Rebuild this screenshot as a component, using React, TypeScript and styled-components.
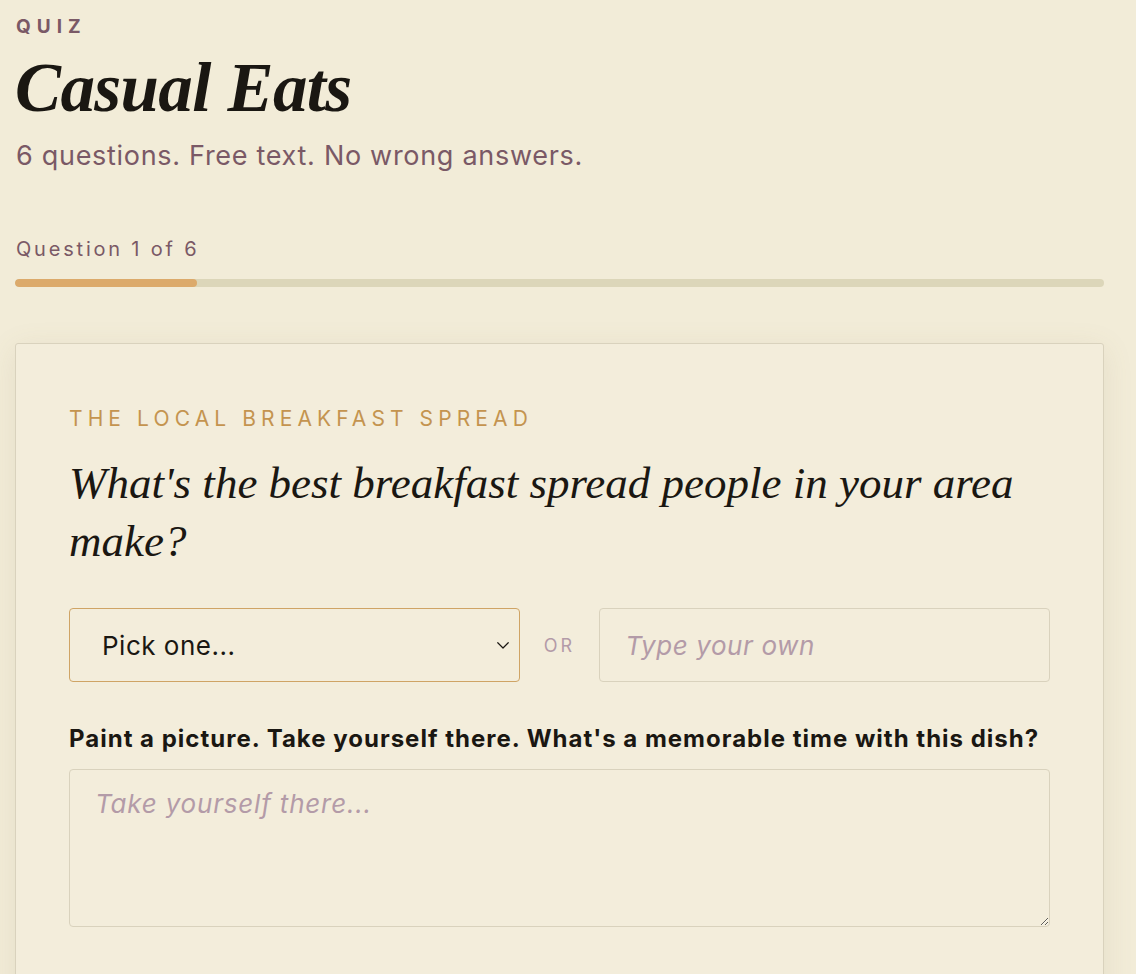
import React from "react";
import styled, { createGlobalStyle } from "styled-components";

const colors = {
  bg: "#f2ecd8",
  ink: "#1a1712",
  mauve: "#7a5966",
  mauveLight: "#b39ba8",
  gold: "#c4944f",
  goldBorder: "#cfa465",
  line: "#d9d2bd",
  track: "#dcd6b9",
  fill: "#dcaa6b",
};

const sans = `Inter, "Open Sans", "Liberation Sans", sans-serif`;
const serif = `"Liberation Serif", "DejaVu Serif", serif`;

const GlobalStyle = createGlobalStyle`
  html, body {
    margin: 0;
    background: ${colors.bg};
    font-family: ${sans};
    color: ${colors.ink};
  }
  * { box-sizing: border-box; }
`;

const Page = styled.main`
  padding: 14px 32px 0 15px;
  overflow: hidden;
  height: 974px;
`;

const Eyebrow = styled.div`
  font-size: 19px;
  line-height: 26px;
  font-weight: 700;
  letter-spacing: 6px;
  color: ${colors.mauve};
  padding-left: 1px;
`;

const Title = styled.h1`
  margin: 14px 0 0;
  font-family: ${serif};
  font-style: italic;
  font-weight: 700;
  font-size: 69px;
  line-height: 1;
  letter-spacing: -0.6px;
  color: ${colors.ink};
`;

const Subtitle = styled.p`
  margin: 16px 0 0 1px;
  font-size: 27px;
  line-height: 33px;
  letter-spacing: 0.7px;
  color: ${colors.mauve};
`;

const ProgressLabel = styled.div`
  margin: 64px 0 0 1px;
  font-size: 20px;
  line-height: 26px;
  letter-spacing: 2.8px;
  color: ${colors.mauve};
`;

const Track = styled.div`
  margin-top: 17px;
  height: 8px;
  border-radius: 4px;
  background: ${colors.track};
  overflow: hidden;
`;

const Fill = styled.div`
  height: 100%;
  border-radius: 4px;
  background: ${colors.fill};
`;

const Card = styled.section`
  margin-top: 56px;
  border: 1.5px solid ${colors.line};
  border-radius: 3px;
  background: #f3eddb;
  box-shadow: 0 6px 30px rgba(140, 120, 80, 0.12);
  padding: 61px 53px 120px;
`;

const Category = styled.div`
  font-size: 21px;
  line-height: 27px;
  letter-spacing: 5.1px;
  color: ${colors.gold};
`;

const Question = styled.h2`
  margin: 22px 0 0;
  font-family: ${serif};
  font-style: italic;
  font-weight: 400;
  font-size: 45px;
  line-height: 58px;
  color: ${colors.ink};
`;

const AnswerRow = styled.div`
  margin-top: 38px;
  display: grid;
  grid-template-columns: 1fr auto 1fr;
  align-items: center;
  gap: 24px;
`;

const SelectWrap = styled.div`
  position: relative;
`;

const Select = styled.select`
  appearance: none;
  width: 100%;
  height: 74px;
  padding: 0 48px 0 32px;
  font-family: ${sans};
  font-size: 26px;
  letter-spacing: 0.5px;
  color: ${colors.ink};
  background: transparent;
  border: 1.5px solid ${colors.goldBorder};
  border-radius: 4px;
  outline: none;
`;

const Chevron = styled.svg`
  position: absolute;
  right: 8px;
  top: 50%;
  transform: translateY(-50%);
  pointer-events: none;
`;

const Or = styled.span`
  font-size: 18px;
  letter-spacing: 3px;
  color: ${colors.mauveLight};
`;

const TextInput = styled.input`
  width: 100%;
  height: 74px;
  padding: 0 25px;
  font-family: ${sans};
  font-size: 26px;
  letter-spacing: 0.6px;
  color: ${colors.ink};
  background: transparent;
  border: 1.5px solid ${colors.line};
  border-radius: 4px;
  outline: none;
  &::placeholder {
    color: ${colors.mauveLight};
    font-style: italic;
  }
`;

const FieldLabel = styled.label`
  display: block;
  margin-top: 42px;
  font-size: 24px;
  line-height: 29px;
  font-weight: 700;
  letter-spacing: 1px;
  color: ${colors.ink};
`;

const TextArea = styled.textarea`
  display: block;
  width: 100%;
  height: 158px;
  margin-top: 16px;
  padding: 18px 25px;
  font-family: ${sans};
  font-size: 26px;
  letter-spacing: 0.8px;
  color: ${colors.ink};
  background: transparent;
  border: 1.5px solid ${colors.line};
  border-radius: 4px;
  outline: none;
  resize: vertical;
  &::placeholder {
    color: ${colors.mauveLight};
    font-style: italic;
  }
`;

export default function App() {
  const current = 1;
  const total = 6;
  return (
    <>
      <GlobalStyle />
      <Page>
        <Eyebrow>QUIZ</Eyebrow>
        <Title>Casual Eats</Title>
        <Subtitle>6 questions. Free text. No wrong answers.</Subtitle>

        <ProgressLabel>
          Question {current} of {total}
        </ProgressLabel>
        <Track>
          <Fill style={{ width: `${(current / total) * 100}%` }} />
        </Track>

        <Card>
          <Category>THE LOCAL BREAKFAST SPREAD</Category>
          <Question>What's the best breakfast spread people in your area make?</Question>

          <AnswerRow>
            <SelectWrap>
              <Select defaultValue="">
                <option value="">Pick one...</option>
                <option>Jam</option>
                <option>Honey butter</option>
              </Select>
              <Chevron width="18" height="18" viewBox="0 0 24 24" fill="none">
                <path d="M5 9l7 7 7-7" stroke={colors.ink} strokeWidth="1.6" strokeLinecap="round" strokeLinejoin="round" />
              </Chevron>
            </SelectWrap>
            <Or>OR</Or>
            <TextInput placeholder="Type your own" />
          </AnswerRow>

          <FieldLabel htmlFor="memory">
            Paint a picture. Take yourself there. What's a memorable time with this dish?
          </FieldLabel>
          <TextArea id="memory" placeholder="Take yourself there..." />
        </Card>
      </Page>
    </>
  );
}
